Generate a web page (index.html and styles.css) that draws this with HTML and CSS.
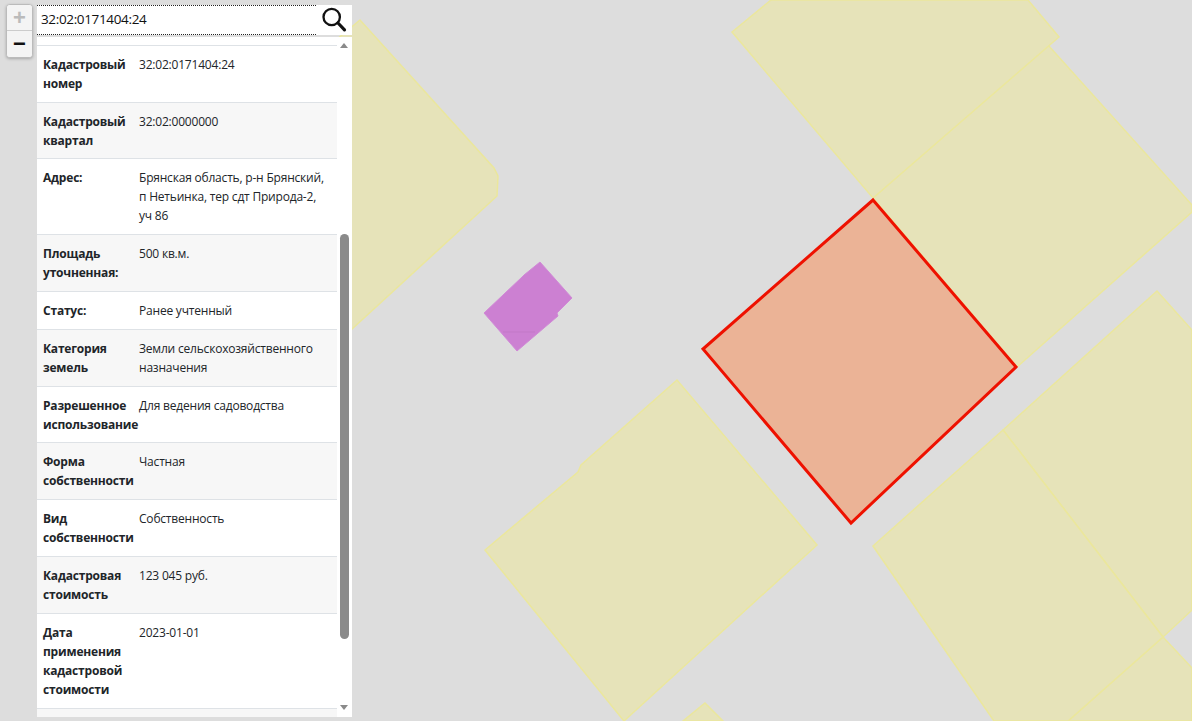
FILE: index.html
```html
<!DOCTYPE html>
<html lang="ru">
<head>
  <meta charset="UTF-8">
  <title>Кадастровая карта</title>
  <link rel="stylesheet" href="styles.css">
</head>
<body>

  <div class="map">
    <svg class="map-layer" width="1192" height="721" viewBox="0 0 1192 721">
      <g class="parcel">
        <polygon points="300,70 360,20 494,168 498,176 497,196 340,340 300,340"/>
        <polygon points="1048,45 1192,205 1192,212 1017,367 873,198"/>
        <polygon points="732,32 771,0 1028,0 1059,37 873,198"/>
        <polygon points="1157,291 1192,330 1192,610 1163,637 1003,430"/>
        <polygon points="1163,637 1192,668 1192,721 1068,721"/>
        <polygon points="873,546 1003,430 1163,637 1068,721 994,721"/>
        <polygon points="485,550 578,472 581,465 677,380 817,545 624,721"/>
        <polygon points="705,703 723,721 683,721"/>
      </g>
      <g class="building">
        <polygon points="540,262 572,298 557,313 558,316 517,351 484,313 522,277 524,275"/>
        <line x1="503" y1="332" x2="535" y2="332"/>
      </g>
      <polygon class="selected" points="873,200 1016,367 851,523 703,349"/>
    </svg>
  </div>

  <div class="zoom">
    <a class="zoom-btn zoom-disabled">+</a>
    <a class="zoom-btn">&minus;</a>
  </div>

  <div class="panel">
    <div class="search">
      <input class="search-input" type="text" value="32:02:0171404:24">
      <button class="search-btn" type="button">
        <svg width="28" height="26" viewBox="0 0 28 26">
          <circle cx="11.7" cy="10" r="8.2" fill="none" stroke="#111" stroke-width="2.3"/>
          <line x1="18" y1="16" x2="24.5" y2="22.8" stroke="#111" stroke-width="3.2" stroke-linecap="round"/>
        </svg>
      </button>
    </div>

    <div class="info">
      <table class="info-table">
        <tr><th>Кадастровый номер</th><td>32:02:0171404:24</td></tr>
        <tr><th>Кадастровый квартал</th><td>32:02:0000000</td></tr>
        <tr><th>Адрес:</th><td>Брянская область, р-н Брянский, п Нетьинка, тер сдт Природа-2, уч 86</td></tr>
        <tr><th>Площадь уточненная:</th><td>500 кв.м.</td></tr>
        <tr><th>Статус:</th><td>Ранее учтенный</td></tr>
        <tr><th>Категория земель</th><td>Земли сельскохозяйственного назначения</td></tr>
        <tr><th>Разрешенное использование</th><td>Для ведения садоводства</td></tr>
        <tr><th>Форма собственности</th><td>Частная</td></tr>
        <tr><th>Вид собственности</th><td>Собственность</td></tr>
        <tr><th>Кадастровая стоимость</th><td>123 045 руб.</td></tr>
        <tr><th>Дата применения кадастровой стоимости</th><td>2023-01-01</td></tr>
        <tr><th></th><td></td></tr>
      </table>

      <div class="scrollbar">
        <span class="arrow arrow-up"></span>
        <span class="thumb"></span>
        <span class="arrow arrow-down"></span>
      </div>
    </div>
  </div>

</body>
</html>
```

FILE: styles.css
```css
html, body {
  height: 100%;
}

body {
  margin: 0;
  overflow: hidden;
  background-color: #ddd;
  font-family: "Open Sans", sans-serif;
  color: #212529;
}

.map-layer {
  position: absolute;
  top: 0;
  left: 0;
  display: block;
}

.parcel polygon {
  fill: #e6e3b9;
  stroke: #ebe79c;
  stroke-width: 1.5;
}

.building polygon {
  fill: #cc80d2;
  stroke: #d08ad6;
  stroke-width: 1;
}

.building line {
  stroke: #bd76c4;
  stroke-width: 0.7;
}

.selected {
  fill: #ebb396;
  stroke: #ee1100;
  stroke-width: 3;
}

.zoom {
  position: absolute;
  top: 4px;
  left: 6px;
  width: 25px;
  border: 1px solid #bbb;
  border-radius: 4px;
  box-shadow: 0 1px 3px rgba(0, 0, 0, 0.25);
  background-color: #fff;
}

.zoom-btn {
  display: block;
  height: 26px;
  line-height: 26px;
  text-align: center;
  font-family: "Liberation Sans", sans-serif;
  font-size: 22px;
  font-weight: bold;
  color: #111;
  background-color: #f4f4f4;
  border-radius: 0 0 3px 3px;
}

.zoom-disabled {
  height: 25px;
  color: #bbb;
  border-bottom: 1px solid #ccc;
  border-radius: 3px 3px 0 0;
}

.panel {
  position: absolute;
  top: 5px;
  left: 37px;
  width: 315px;
}

.search {
  display: flex;
  height: 30px;
  background-color: #fff;
}

.search-input {
  flex: 1;
  min-width: 0;
  box-sizing: border-box;
  height: 30px;
  padding: 0 4px 2px;
  border: none;
  border-top: 1px dotted #222;
  border-bottom: 1px dotted #222;
  outline: none;
  font-family: "Open Sans", sans-serif;
  font-size: 13.5px;
  letter-spacing: -0.35px;
  color: #111;
}

.search-btn {
  display: flex;
  align-items: center;
  justify-content: center;
  width: 36px;
  padding: 0;
  border: none;
  background: none;
}

.info {
  display: flex;
  height: 680px;
  margin-top: 2px;
  overflow: hidden;
  background-color: #fff;
}

.info-table {
  width: 300px;
  height: 0;
  margin-top: 7.8px;
  border-collapse: collapse;
  table-layout: fixed;
  font-size: 12px;
  letter-spacing: -0.2px;
  line-height: 18.9px;
}

.info-table tr {
  border-top: 1px solid #dee2e6;
}

.info-table tr:nth-child(even) {
  background-color: #f7f7f7;
}

.info-table th {
  width: 96px;
  padding: 10px 0 8px 6px;
  text-align: left;
  vertical-align: top;
  font-weight: bold;
}

.info-table td {
  padding: 10px 6px 8px 0;
  vertical-align: top;
}

.scrollbar {
  position: relative;
  flex: 1;
}

.arrow {
  position: absolute;
  left: 3px;
  width: 0;
  height: 0;
  border-left: 4.5px solid transparent;
  border-right: 4.5px solid transparent;
}

.arrow-up {
  top: 6px;
  border-bottom: 5px solid #8a8a8a;
}

.arrow-down {
  bottom: 7px;
  border-top: 5px solid #8a8a8a;
}

.thumb {
  position: absolute;
  top: 197px;
  left: 3px;
  width: 9px;
  height: 405px;
  border-radius: 5px;
  background-color: #8a8a8a;
}
```
